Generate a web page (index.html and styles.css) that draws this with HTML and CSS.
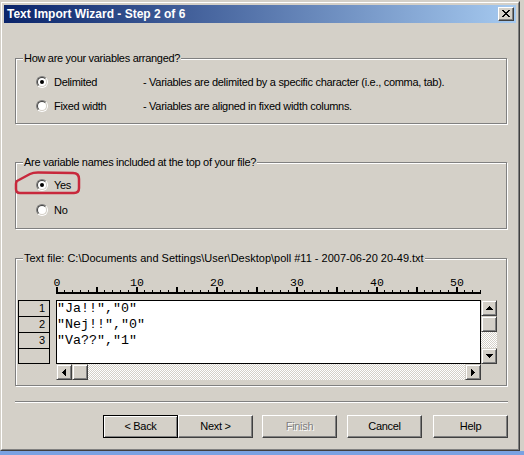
FILE: index.html
```html
<!DOCTYPE html>
<html>
<head>
<meta charset="utf-8">
<title>Text Import Wizard</title>
<link rel="stylesheet" href="styles.css">
</head>
<body>
<div class="screen">
  <div class="window">
    <div class="window-inner">
      <div class="titlebar">
        <span class="title">Text Import Wizard - Step 2 of 6</span>
        <span class="close-btn"><svg width="8" height="7" viewBox="0 0 8 7"><path d="M0 0h2v1H0z M6 0h2v1H6z M1 1h2v1H1z M5 1h2v1H5z M2 2h4v1H2z M3 3h2v1H3z M2 4h4v1H2z M1 5h2v1H1z M5 5h2v1H5z M0 6h2v1H0z M6 6h2v1H6z" fill="#000"/></svg></span>
      </div>
      <div class="client">
        <div class="group g1">
          <span class="group-title">How are your variables arranged?</span>
          <div class="opt-row"><span class="radio checked"></span><span class="opt-label">Delimited</span><span class="opt-desc">- Variables are delimited by a specific character (i.e., comma, tab).</span></div>
          <div class="opt-row"><span class="radio"></span><span class="opt-label">Fixed width</span><span class="opt-desc">- Variables are aligned in fixed width columns.</span></div>
        </div>
        <div class="group g2">
          <span class="group-title">Are variable names included at the top of your file?</span>
          <div class="opt-row"><span class="radio checked"></span><span class="opt-label">Yes</span></div>
          <div class="opt-row"><span class="radio"></span><span class="opt-label">No</span></div>
          <svg class="annotation" width="72" height="30" viewBox="12 168 72 30"><path d="M17 181 L30 174 Q33 172.5 38 172.5 L73 173 Q79 173 79 179 L79 188 Q79 193 74 193 L20 193 Q16 193 16 189 L16 184 Q16 182 17 181 Z" fill="none" stroke="#c8283c" stroke-width="2.5" stroke-linejoin="round"/></svg>
        </div>
        <div class="group g3">
          <span class="group-title path-title">Text file: C:\Documents and Settings\User\Desktop\poll #11 - 2007-06-20 20-49.txt</span>
          <svg class="ruler" width="441" height="41" viewBox="0 0 441 41">
            <defs>
              <pattern id="tickSmall" patternUnits="userSpaceOnUse" width="8" height="41"><rect x="0" y="31" width="1" height="2" fill="#000"/></pattern>
              <pattern id="tickBig" patternUnits="userSpaceOnUse" width="40" height="41"><rect x="0" y="28" width="2" height="5" fill="#000"/></pattern>
            </defs>
            <rect x="0" y="0" width="426" height="41" fill="url(#tickSmall)"/>
            <rect x="0" y="0" width="426" height="41" fill="url(#tickBig)"/>
            <rect x="0" y="33" width="425" height="2" fill="#000"/>
            <g class="ruler-num">
              <text x="1" y="27">0</text>
              <text x="81" y="27">10</text>
              <text x="161" y="27">20</text>
              <text x="241" y="27">30</text>
              <text x="321" y="27">40</text>
              <text x="401" y="27">50</text>
            </g>
          </svg>
          <div class="row-heads">
            <div class="row-head">1</div>
            <div class="row-head">2</div>
            <div class="row-head">3</div>
            <div class="row-head"></div>
          </div>
          <div class="data">
            <div class="data-line">"Ja!!","0"</div>
            <div class="data-line">"Nej!!","0"</div>
            <div class="data-line">"Va??","1"</div>
          </div>
          <div class="vscroll">
            <div class="sbtn"><svg width="7" height="4"><path d="M3 0h1v1h1v1h1v1h1v1H0v-1h1v-1h1v-1h1z"/></svg></div>
            <div class="sbtn"></div>
            <div class="track"></div>
            <div class="sbtn"><svg width="7" height="4"><path d="M0 0h7v1h-1v1h-1v1h-1v1h-1v-1h-1v-1h-1v-1H0z"/></svg></div>
          </div>
          <div class="hscroll">
            <div class="sbtn"><svg width="4" height="7"><path d="M3 0h1v7h-1v-1h-1v-1h-1v-1H0v-1h1v-1h1v-1h1z"/></svg></div>
            <div class="sbtn"></div>
            <div class="track"></div>
            <div class="sbtn"><svg width="4" height="7"><path d="M0 0h1v1h1v1h1v1h1v1h-1v1h-1v1h-1v1H0z"/></svg></div>
          </div>
        </div>
        <div class="sep"></div>
        <div class="buttons">
          <div class="btn default">&lt; Back</div>
          <div class="btn">Next &gt;</div>
          <div class="btn disabled gap9">Finish</div>
          <div class="btn gap10">Cancel</div>
          <div class="btn gap11">Help</div>
        </div>
      </div>
    </div>
  </div>
  <div class="taskbar"></div>
</div>
</body>
</html>
```

FILE: styles.css
```css
* { box-sizing: border-box; }
html, body { margin: 0; padding: 0; }
body {
  width: 524px;
  height: 455px;
  overflow: hidden;
  background: #d4d0c8;
  font-family: "Liberation Sans", Arial, sans-serif;
  font-size: 11px;
  letter-spacing: -0.3px;
  color: #000;
}
.screen {
  display: flex;
  flex-direction: column;
  padding-top: 1px;
  height: 455px;
}
.window {
  width: 520px;
  height: 450px;
  flex: none;
  border: 1px solid;
  border-color: #d4d0c8 #404040 #404040 #d4d0c8;
}
.window-inner {
  height: 100%;
  border: 1px solid;
  border-color: #fff #808080 #808080 #fff;
  padding: 2px;
  background: #d4d0c8;
  display: flex;
  flex-direction: column;
}
.titlebar {
  height: 18px;
  flex: none;
  background: linear-gradient(to right, #0a246a, #a6caf0);
  display: flex;
  align-items: center;
  justify-content: space-between;
  padding: 0 2px 0 3px;
}
.title {
  color: #fff;
  font-weight: bold;
  font-size: 12px;
  letter-spacing: 0;
  line-height: 18px;
}
.close-btn {
  width: 16px;
  height: 14px;
  background: #d4d0c8;
  border: 1px solid;
  border-color: #fff #404040 #404040 #fff;
  box-shadow: inset -1px -1px #808080;
  display: flex;
  align-items: center;
  justify-content: center;
  padding-bottom: 1px;
}
.client {
  flex: 1;
  display: flex;
  flex-direction: column;
  padding: 0 8px 0 11px;
}
.group {
  position: relative;
  border: 1px solid #808080;
  box-shadow: inset 1px 1px #fff, 1px 1px #fff;
  margin-right: 1px;
  flex: none;
}
.group-title {
  position: absolute;
  top: -7px;
  left: 7px;
  padding: 0 1px;
  line-height: 13px;
  background: #d4d0c8;
  white-space: nowrap;
}
.path-title { letter-spacing: 0; }
.g1 {
  margin-top: 35px;
  height: 66px;
  padding: 15px 0 0 20px;
  display: flex;
  flex-direction: column;
  gap: 8px;
}
.g2 {
  margin-top: 38px;
  height: 67px;
  padding: 14px 0 0 20px;
  display: flex;
  flex-direction: column;
  gap: 9px;
}
.opt-row {
  display: flex;
  align-items: center;
  height: 16px;
  line-height: 16px;
  white-space: nowrap;
}
.radio {
  position: relative;
  flex: none;
  width: 12px;
  height: 12px;
  border-radius: 50%;
  border: 1px solid;
  border-color: #808080 #fff #fff #808080;
  margin-right: 6px;
}
.radio::before {
  content: "";
  position: absolute;
  left: 0; top: 0; right: 0; bottom: 0;
  border-radius: 50%;
  border: 1px solid;
  border-color: #404040 #d4d0c8 #d4d0c8 #404040;
  background: #fff;
}
.radio.checked::after {
  content: "";
  position: absolute;
  left: 3px;
  top: 3px;
  width: 4px;
  height: 4px;
  border-radius: 50%;
  background: #000;
}
.opt-label { width: 89px; flex: none; }
.annotation {
  position: absolute;
  left: -4px;
  top: 5px;
}
.g3 {
  margin-top: 29px;
  height: 128px;
  padding: 0 8px 5px 2px;
  display: grid;
  grid-template-columns: 32px 6px 425px 16px;
  grid-template-rows: 41px 64px 16px;
}
.ruler {
  grid-column: 3 / 5;
  grid-row: 1;
  display: block;
  overflow: visible;
}
.ruler-num text {
  font-family: "Liberation Mono", "Courier New", monospace;
  font-size: 11.5px;
  letter-spacing: 0;
  text-anchor: middle;
  fill: #000;
}
.row-heads {
  grid-column: 1;
  grid-row: 2;
  border: 1px solid #000;
  display: flex;
  flex-direction: column;
}
.row-head {
  height: 16px;
  flex: none;
  border-bottom: 1px solid #000;
  text-align: right;
  padding-right: 4px;
  line-height: 15px;
  font-size: 11px;
  letter-spacing: 0;
}
.row-head:last-child {
  flex: 1;
  height: auto;
  border-bottom: none;
}
.data {
  grid-column: 3;
  grid-row: 2;
  background: #fff;
  border: 1px solid #000;
  font-family: "Liberation Mono", "Courier New", monospace;
  font-size: 13.33px;
  letter-spacing: 0;
  line-height: 16px;
  overflow: hidden;
}
.data-line {
  height: 16px;
  white-space: pre;
}
.vscroll {
  grid-column: 4;
  grid-row: 2;
  display: flex;
  flex-direction: column;
}
.hscroll {
  grid-column: 3;
  grid-row: 3;
  display: flex;
}
.sbtn {
  width: 16px;
  height: 16px;
  flex: none;
  background: #d4d0c8;
  border: 1px solid;
  border-color: #d4d0c8 #404040 #404040 #d4d0c8;
  box-shadow: inset 1px 1px #fff, inset -1px -1px #808080;
  display: flex;
  align-items: center;
  justify-content: center;
}
.sbtn svg { display: block; fill: #000; }
.track {
  flex: 1;
  background-color: #fff;
  background-image: repeating-conic-gradient(#d4d0c8 0 25%, #fff 0 50%);
  background-size: 2px 2px;
}
.vscroll .track { height: 16px; flex: none; }
.sep {
  margin-top: 15px;
  height: 2px;
  flex: none;
  border-top: 1px solid #808080;
  border-bottom: 1px solid #fff;
}
.buttons {
  margin-top: 12px;
  display: flex;
  justify-content: flex-end;
}
.btn {
  width: 75px;
  height: 23px;
  flex: none;
  background: #d4d0c8;
  border: 1px solid;
  border-color: #fff #404040 #404040 #fff;
  box-shadow: inset -1px -1px #808080;
  display: flex;
  align-items: center;
  justify-content: center;
  line-height: 13px;
}
.btn.default {
  border-color: #000;
  box-shadow: inset 1px 1px #fff, inset -1px -1px #808080;
}
.btn.disabled {
  color: #808080;
  text-shadow: 1px 1px 0 #fff;
}
.gap9 { margin-left: 9px; }
.gap10 { margin-left: 10px; }
.gap11 { margin-left: 11px; }
.taskbar {
  height: 4px;
  flex: none;
  background: #7aa2e2;
}
```
